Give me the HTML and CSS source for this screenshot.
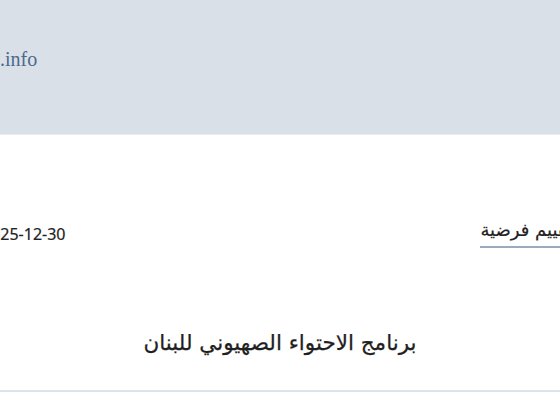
FILE: index.html
```html
<!DOCTYPE html>
<html lang="ar">
<head>
    <meta charset="UTF-8">
    <meta name="viewport" content="width=device-width, initial-scale=1.0">
    <title>برنامج الاحتواء الصهيوني للبنان</title>
    <link rel="stylesheet" href="styles.css">
</head>
<body>
    <div class="header">
        <a class="brand" href="#" dir="ltr">.info</a>
    </div>

    <div class="post">
        <!-- fecha y categoria -->
        <div class="meta">
            <span class="date" dir="ltr">2025-12-30</span>
            <a class="category" href="#">تقييم فرضية</a>
        </div>

        <h1 class="post-title">برنامج الاحتواء الصهيوني للبنان</h1>
    </div>
</body>
</html>
```

FILE: styles.css
```css
body {
    margin: 0;
    padding: 0;
    background-color: #ffffff;
    font-family: "DejaVu Sans", "Noto Sans", sans-serif;
    color: #1f1f1f;
    overflow-x: hidden;
}

.header {
    height: 135px;
    background-color: #dae0e7;
    border-bottom: 1px solid #e9edf1;
    display: flex;
    align-items: flex-start;
    padding-top: 48px;
    box-sizing: border-box;
}

.brand {
    font-family: "Liberation Serif", "DejaVu Serif", serif;
    font-size: 20px;
    color: #4a6a8d;
    text-decoration: none;
}

.post {
    border-bottom: 2px solid #dde3ea;
    padding-bottom: 35px;
}

.meta {
    display: flex;
    justify-content: space-between;
    align-items: center;
    margin: 84px -12px 0 -18px;
}

.date {
    font-family: "Noto Sans", "Open Sans", sans-serif;
    font-size: 16px;
    color: #222;
    -webkit-text-stroke: 0.2px #222;
}

.category {
    direction: rtl;
    font-size: 18px;
    color: #222;
    text-decoration: none;
    border-bottom: 2px solid #9aabbd;
    padding: 0 0 6px 0;
    -webkit-text-stroke: 0.2px #222;
}

.post-title {
    text-align: center;
    font-size: 21.5px;
    font-weight: normal;
    margin: 82px 0 0;
    direction: rtl;
    -webkit-text-stroke: 0.25px #1f1f1f;
}
```
